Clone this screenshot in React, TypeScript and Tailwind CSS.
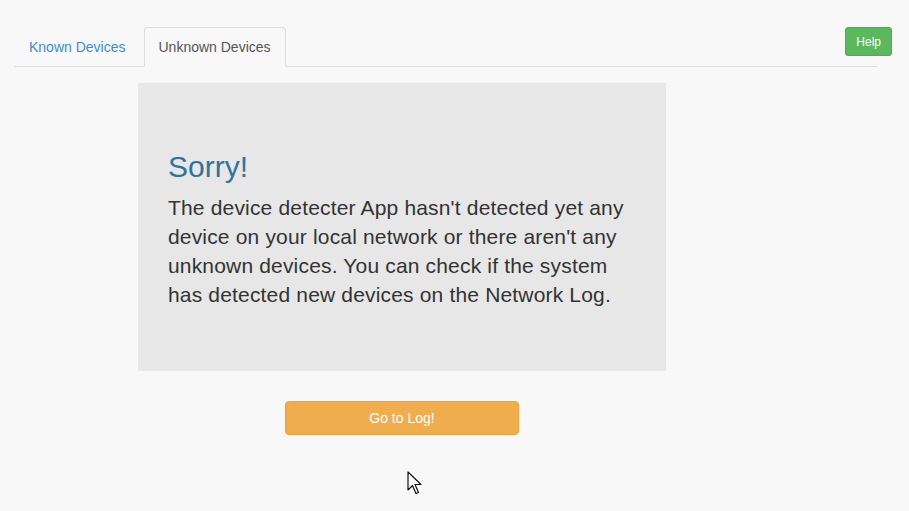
export default function App() {
  return (
    <main className="relative min-h-[511px] bg-[#f8f8f8] font-['Liberation_Sans',Arial,sans-serif] text-[#333]">
      <header className="relative px-[14px] pr-[32px] pt-[27px]">
        <ul className="flex border-b border-[#ddd] text-[14px] leading-[20px]">
          <li className="-mb-px mr-[3px]">
            <a className="block rounded-t-[4px] border border-transparent px-[14px] py-[9px] text-[#428bca]" href="#">
              Known Devices
            </a>
          </li>
          <li className="-mb-px">
            <a
              className="block rounded-t-[4px] border border-[#ddd] border-b-transparent bg-[#f8f8f8] px-[14px] py-[9px] text-[#555]"
              href="#"
            >
              Unknown Devices
            </a>
          </li>
        </ul>
        <button className="absolute right-[17px] top-[27px] h-[29px] rounded-[3px] border border-[#4cae4c] bg-[#5cb85c] px-[10px] text-[12px] text-white">
          Help
        </button>
      </header>

      <section className="ml-[138px] mt-[16px] w-[528px]">
        <div className="bg-[#e7e7e7] px-[30px] pb-[62px] pt-[67px]">
          <h1 className="text-[30px] leading-[33px] text-[#31739b]">Sorry!</h1>
          <p className="mt-[10px] text-[21px] leading-[29px] tracking-[0.17px] text-[#333]">
            The device detecter App hasn't detected yet any device on your local network or there aren't any
            unknown devices. You can check if the system has detected new devices on the Network Log.
          </p>
        </div>
        <div className="mt-[30px] flex">
          <button className="ml-[147px] h-[34px] w-[234px] rounded-[4px] border border-[#eea236] bg-[#f0ad4e] text-[14px] text-white">
            Go to Log!
          </button>
        </div>
      </section>

      <svg className="absolute left-[407px] top-[471px]" width="16" height="26" viewBox="0 0 16 26">
        <path
          d="M1 1 L1 19 L5.5 14.5 L9 22.5 L11.5 21.5 L8 13.5 L14 13.5 Z"
          fill="#fff"
          stroke="#111"
          strokeWidth="1.2"
          strokeLinejoin="round"
        />
      </svg>
    </main>
  );
}
